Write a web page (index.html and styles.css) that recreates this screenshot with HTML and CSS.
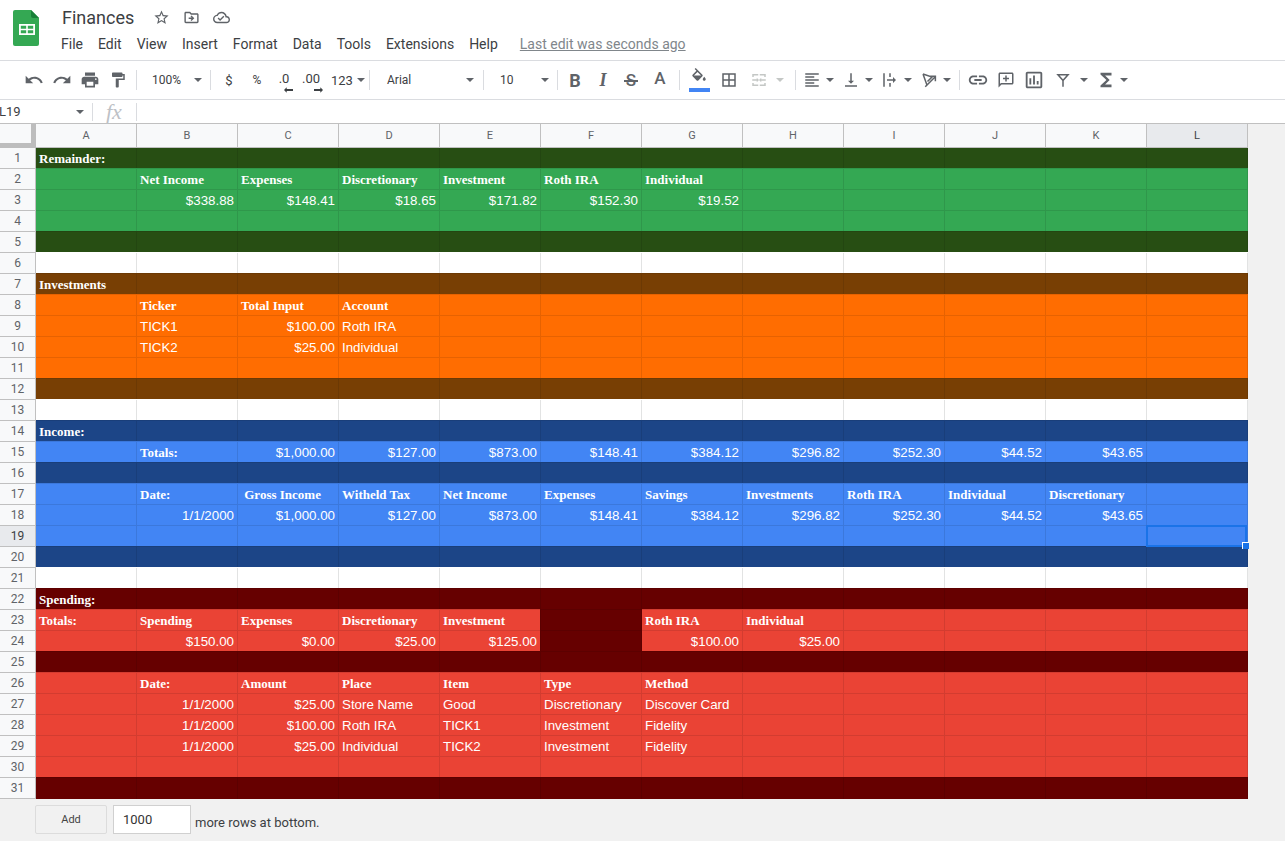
FILE: index.html
```html
<!DOCTYPE html>
<html lang="en">
<head>
    <meta charset="UTF-8">
    <title>Finances - Google Sheets</title>
    <link rel="stylesheet" href="styles.css">
</head>
<body>
    <header class="top">
        <svg class="logo" viewBox="0 0 26 36" width="26" height="36">
            <path fill="#34a853" d="M2 0h16l8 8v26a2 2 0 0 1-2 2H2a2 2 0 0 1-2-2V2a2 2 0 0 1 2-2z"/>
            <path fill="#188038" d="M18 0l8 8h-6a2 2 0 0 1-2-2z"/>
            <path fill="#fff" fill-rule="evenodd" d="M6 14h16v11H6zm1.800 1.800v2.900h5.400v-2.900zm7 0v2.900h5.400v-2.900zm-7 4.500v2.900h5.400v-2.900zm7 0v2.900h5.400v-2.900z"/>
        </svg>
        <div class="top-main">
            <div class="title-row">
                <span class="doc-title">Finances</span>
                <svg class="title-icon" viewBox="0 0 24 24"><path d="M22 9.24l-7.19-.62L12 2 9.19 8.63 2 9.24l5.46 4.73L5.82 21 12 17.27 18.18 21l-1.63-7.03L22 9.24zM12 15.4l-3.76 2.27 1-4.28-3.32-2.88 4.38-.38L12 6.1l1.71 4.04 4.38.38-3.32 2.88 1 4.28L12 15.4z"/></svg>
                <svg class="title-icon" viewBox="0 0 24 24"><path d="M20 6h-8l-2-2H4c-1.1 0-2 .9-2 2v12c0 1.1.9 2 2 2h16c1.1 0 2-.9 2-2V8c0-1.1-.9-2-2-2zm0 12H4V6h5.17l2 2H20v10zm-8.01-9l-1.41 1.41L12.16 12H8v2h4.16l-1.59 1.59L11.99 17 16 13.01 11.99 9z"/></svg>
                <svg class="title-icon" viewBox="0 0 24 24"><path d="M19.35 10.04C18.67 6.59 15.64 4 12 4 9.11 4 6.6 5.64 5.35 8.04 2.34 8.36 0 10.91 0 14c0 3.31 2.69 6 6 6h13c2.76 0 5-2.24 5-5 0-2.64-2.05-4.78-4.65-4.96zM19 18H6c-2.21 0-4-1.79-4-4 0-2.05 1.53-3.76 3.56-3.97l1.07-.11.5-.95C8.08 7.14 9.94 6 12 6c2.62 0 4.88 1.86 5.39 4.43l.3 1.5 1.53.11c1.56.1 2.78 1.41 2.78 2.96 0 1.65-1.35 3-3 3zm-9-3.82l-2.09-2.09L6.5 13.5 10 17l6.01-6.01-1.41-1.41z"/></svg>
            </div>
            <nav class="menu">
                <span>File</span>
                <span>Edit</span>
                <span>View</span>
                <span>Insert</span>
                <span>Format</span>
                <span>Data</span>
                <span>Tools</span>
                <span>Extensions</span>
                <span>Help</span>
                <span class="last-edit">Last edit was seconds ago</span>
            </nav>
        </div>
    </header>

    <div class="toolbar">
        <button class="tb tb-lg"><svg viewBox="0 0 24 24"><path d="M12.5 8c-2.65 0-5.05.99-6.9 2.6L2 7v9h9l-3.62-3.62c1.39-1.16 3.16-1.88 5.12-1.88 3.54 0 6.55 2.31 7.6 5.5l2.37-.78C21.08 11.03 17.15 8 12.5 8z"/></svg></button>
        <button class="tb tb-lg"><svg viewBox="0 0 24 24"><path d="M18.4 10.6C16.55 8.99 14.15 8 11.5 8c-4.65 0-8.58 3.03-9.96 7.22L3.9 16c1.05-3.19 4.05-5.5 7.6-5.5 1.95 0 3.73.72 5.12 1.88L13 16h9V7l-3.6 3.6z"/></svg></button>
        <button class="tb tb-lg"><svg viewBox="0 0 24 24"><path d="M19 8H5c-1.66 0-3 1.34-3 3v6h4v4h12v-4h4v-6c0-1.66-1.34-3-3-3zm-3 11H8v-5h8v5zm3-7c-.55 0-1-.45-1-1s.45-1 1-1 1 .45 1 1-.45 1-1 1zm-1-9H6v4h12V3z"/></svg></button>
        <button class="tb"><svg viewBox="0 0 24 24"><path d="M18 4V3c0-.55-.45-1-1-1H5c-.55 0-1 .45-1 1v4c0 .55.45 1 1 1h12c.55 0 1-.45 1-1V6h1v4H9v11c0 .55.45 1 1 1h2c.55 0 1-.45 1-1v-9h8V4h-3z"/></svg></button>
        <i class="sep"></i>
        <div class="pick pick-zoom"><span>100%</span><b class="arrow"></b></div>
        <i class="sep sep-tight"></i>
        <button class="tb tb-text">$</button>
        <button class="tb tb-text tb-small">%</button>
        <button class="tb tb-dec">.0<svg viewBox="0 0 10 6"><path d="M0 3l3-3v2h7v2H3v2z"/></svg></button>
        <button class="tb tb-dec">.00<svg viewBox="0 0 10 6"><path d="M10 3L7 0v2H0v2h7v2z"/></svg></button>
        <div class="pick pick-num"><span>123</span><b class="arrow"></b></div>
        <i class="sep"></i>
        <div class="pick pick-font"><span>Arial</span><b class="arrow"></b></div>
        <i class="sep sep-tight"></i>
        <div class="pick pick-size"><span>10</span><b class="arrow"></b></div>
        <i class="sep sep-size"></i>
        <button class="tb tb-fmt tb-bold">B</button>
        <button class="tb tb-fmt tb-italic">I</button>
        <button class="tb tb-fmt tb-strike">S</button>
        <button class="tb tb-fmt tb-color">A</button>
        <i class="sep sep-wide"></i>
        <button class="tb tb-fill"><svg viewBox="0 0 24 24"><path d="M16.56 8.94L7.62 0 6.21 1.41l2.38 2.38-5.15 5.15c-.59.59-.59 1.54 0 2.12l5.5 5.5c.29.29.68.44 1.06.44s.77-.15 1.06-.44l5.5-5.5c.59-.58.59-1.53 0-2.12zM5.21 10L10 5.21 14.79 10H5.21zM19 11.5s-2 2.17-2 3.5c0 1.1.9 2 2 2s2-.9 2-2c0-1.33-2-3.5-2-3.5z"/></svg></button>
        <button class="tb"><svg viewBox="0 0 24 24"><path d="M3 3v18h18V3H3zm8 16H5v-6h6v6zm0-8H5V5h6v6zm8 8h-6v-6h6v6zm0-8h-6V5h6v6z"/></svg></button>
        <button class="tb tb-off"><svg viewBox="0 0 24 24"><path d="M3 4h8v2H5v2H3zm10 0h8v4h-2V6h-6zM3 16h2v2h6v2H3zm16 0h2v4h-8v-2h6zM3 11h6V9l3 3-3 3v-2H3zm18 0h-6V9l-3 3 3 3v-2h6z"/></svg></button>
        <b class="arrow arrow-off"></b>
        <i class="sep sep-merge"></i>
        <button class="tb tb-n tb-align"><svg viewBox="0 0 24 24"><path d="M15 15H3v2h12v-2zm0-8H3v2h12V7zM3 13h18v-2H3v2zm0 8h18v-2H3v2zM3 3v2h18V3H3z"/></svg></button>
        <b class="arrow"></b>
        <button class="tb tb-n"><svg viewBox="0 0 24 24"><path d="M16 13h-3V3h-2v10H8l4 4 4-4zM4 19v2h16v-2H4z"/></svg></button>
        <b class="arrow"></b>
        <button class="tb tb-n"><svg viewBox="0 0 24 24"><path d="M3 3h2v18H3zM11 3h2v5h-2zm0 13h2v5h-2zM8 11h8V8l4 4-4 4v-3H8z"/></svg></button>
        <b class="arrow"></b>
        <button class="tb tb-n"><svg class="stroked" viewBox="0 0 24 24"><path d="M4 4l5 14M4 4l12 4-6 6M7 21L20 8M14 7h6.500v6.500"/></svg></button>
        <b class="arrow"></b>
        <i class="sep sep-rotate"></i>
        <button class="tb tb-xl"><svg viewBox="0 0 24 24"><path d="M3.9 12c0-1.71 1.39-3.1 3.1-3.1h4V7H7c-2.76 0-5 2.24-5 5s2.24 5 5 5h4v-1.9H7c-1.71 0-3.1-1.39-3.1-3.1zM8 13h8v-2H8v2zm9-6h-4v1.9h4c1.71 0 3.1 1.39 3.1 3.1s-1.39 3.1-3.1 3.1h-4V17h4c2.76 0 5-2.24 5-5s-2.24-5-5-5z"/></svg></button>
        <button class="tb"><svg viewBox="0 0 24 24"><path d="M20 2H4c-1.1 0-2 .9-2 2v18l4-4h14c1.1 0 2-.9 2-2V4c0-1.1-.9-2-2-2zm0 14H5.17L4 17.17V4h16v12zM11 14h2v-3h3V9h-3V6h-2v3H8v2h3z"/></svg></button>
        <button class="tb tb-xl"><svg viewBox="0 0 24 24"><path d="M19 3H5c-1.1 0-2 .9-2 2v14c0 1.1.9 2 2 2h14c1.1 0 2-.9 2-2V5c0-1.1-.9-2-2-2zm0 16H5V5h14v14zM7 10h2v7H7zm4-3h2v10h-2zm4 6h2v4h-2z"/></svg></button>
        <button class="tb tb-filter"><svg viewBox="0 0 24 24"><path fill-rule="evenodd" d="M3 4h18l-8 9v8h-2v-8zm4.500 2L12 11l4.500-5z"/></svg></button>
        <b class="arrow"></b>
        <button class="tb tb-n tb-xl tb-sigma"><svg viewBox="0 0 24 24"><path d="M18 4H6v2l6.500 6L6 18v2h12v-3h-7l5-5-5-5h7V4z"/></svg></button>
        <b class="arrow"></b>
    </div>

    <div class="formula-bar">
        <div class="name-box"><span>L19</span><b class="arrow"></b></div>
        <i class="fsep"></i>
        <span class="fx">fx</span>
        <i class="fsep"></i>
    </div>

    <table class="sheet">
        <thead>
            <tr>
                <th class="corner"></th>
                <th>A</th><th>B</th><th>C</th><th>D</th><th>E</th><th>F</th><th>G</th><th>H</th><th>I</th><th>J</th><th>K</th><th class="active">L</th>
            </tr>
        </thead>
        <tbody>
            <tr class="dark-green"><th>1</th><td class="h">Remainder:</td><td></td><td></td><td></td><td></td><td></td><td></td><td></td><td></td><td></td><td></td><td></td></tr>
            <tr class="green"><th>2</th><td></td><td class="h">Net Income</td><td class="h">Expenses</td><td class="h">Discretionary</td><td class="h">Investment</td><td class="h">Roth IRA</td><td class="h">Individual</td><td></td><td></td><td></td><td></td><td></td></tr>
            <tr class="green"><th>3</th><td></td><td class="n">$338.88</td><td class="n">$148.41</td><td class="n">$18.65</td><td class="n">$171.82</td><td class="n">$152.30</td><td class="n">$19.52</td><td></td><td></td><td></td><td></td><td></td></tr>
            <tr class="green"><th>4</th><td></td><td></td><td></td><td></td><td></td><td></td><td></td><td></td><td></td><td></td><td></td><td></td></tr>
            <tr class="dark-green"><th>5</th><td></td><td></td><td></td><td></td><td></td><td></td><td></td><td></td><td></td><td></td><td></td><td></td></tr>
            <tr class="blank"><th>6</th><td></td><td></td><td></td><td></td><td></td><td></td><td></td><td></td><td></td><td></td><td></td><td></td></tr>
            <tr class="dark-orange"><th>7</th><td class="h">Investments</td><td></td><td></td><td></td><td></td><td></td><td></td><td></td><td></td><td></td><td></td><td></td></tr>
            <tr class="orange"><th>8</th><td></td><td class="h">Ticker</td><td class="h">Total Input</td><td class="h">Account</td><td></td><td></td><td></td><td></td><td></td><td></td><td></td><td></td></tr>
            <tr class="orange"><th>9</th><td></td><td>TICK1</td><td class="n">$100.00</td><td>Roth IRA</td><td></td><td></td><td></td><td></td><td></td><td></td><td></td><td></td></tr>
            <tr class="orange"><th>10</th><td></td><td>TICK2</td><td class="n">$25.00</td><td>Individual</td><td></td><td></td><td></td><td></td><td></td><td></td><td></td><td></td></tr>
            <tr class="orange"><th>11</th><td></td><td></td><td></td><td></td><td></td><td></td><td></td><td></td><td></td><td></td><td></td><td></td></tr>
            <tr class="dark-orange"><th>12</th><td></td><td></td><td></td><td></td><td></td><td></td><td></td><td></td><td></td><td></td><td></td><td></td></tr>
            <tr class="blank"><th>13</th><td></td><td></td><td></td><td></td><td></td><td></td><td></td><td></td><td></td><td></td><td></td><td></td></tr>
            <tr class="dark-blue"><th>14</th><td class="h">Income:</td><td></td><td></td><td></td><td></td><td></td><td></td><td></td><td></td><td></td><td></td><td></td></tr>
            <tr class="blue"><th>15</th><td></td><td class="h">Totals:</td><td class="n">$1,000.00</td><td class="n">$127.00</td><td class="n">$873.00</td><td class="n">$148.41</td><td class="n">$384.12</td><td class="n">$296.82</td><td class="n">$252.30</td><td class="n">$44.52</td><td class="n">$43.65</td><td></td></tr>
            <tr class="dark-blue"><th>16</th><td></td><td></td><td></td><td></td><td></td><td></td><td></td><td></td><td></td><td></td><td></td><td></td></tr>
            <tr class="blue"><th>17</th><td></td><td class="h">Date:</td><td class="h">&nbsp;Gross Income</td><td class="h">Witheld Tax</td><td class="h">Net Income</td><td class="h">Expenses</td><td class="h">Savings</td><td class="h">Investments</td><td class="h">Roth IRA</td><td class="h">Individual</td><td class="h">Discretionary</td><td></td></tr>
            <tr class="blue"><th>18</th><td></td><td class="n">1/1/2000</td><td class="n">$1,000.00</td><td class="n">$127.00</td><td class="n">$873.00</td><td class="n">$148.41</td><td class="n">$384.12</td><td class="n">$296.82</td><td class="n">$252.30</td><td class="n">$44.52</td><td class="n">$43.65</td><td></td></tr>
            <tr class="blue"><th class="active">19</th><td></td><td></td><td></td><td></td><td></td><td></td><td></td><td></td><td></td><td></td><td></td><td class="selected"><span class="handle"></span></td></tr>
            <tr class="dark-blue"><th>20</th><td></td><td></td><td></td><td></td><td></td><td></td><td></td><td></td><td></td><td></td><td></td><td></td></tr>
            <tr class="blank"><th>21</th><td></td><td></td><td></td><td></td><td></td><td></td><td></td><td></td><td></td><td></td><td></td><td></td></tr>
            <tr class="dark-red"><th>22</th><td class="h">Spending:</td><td></td><td></td><td></td><td></td><td></td><td></td><td></td><td></td><td></td><td></td><td></td></tr>
            <tr class="red"><th>23</th><td class="h">Totals:</td><td class="h">Spending</td><td class="h">Expenses</td><td class="h">Discretionary</td><td class="h">Investment</td><td class="gap"></td><td class="h">Roth IRA</td><td class="h">Individual</td><td></td><td></td><td></td><td></td></tr>
            <tr class="red"><th>24</th><td></td><td class="n">$150.00</td><td class="n">$0.00</td><td class="n">$25.00</td><td class="n">$125.00</td><td class="gap"></td><td class="n">$100.00</td><td class="n">$25.00</td><td></td><td></td><td></td><td></td></tr>
            <tr class="dark-red"><th>25</th><td></td><td></td><td></td><td></td><td></td><td></td><td></td><td></td><td></td><td></td><td></td><td></td></tr>
            <tr class="red"><th>26</th><td></td><td class="h">Date:</td><td class="h">Amount</td><td class="h">Place</td><td class="h">Item</td><td class="h">Type</td><td class="h">Method</td><td></td><td></td><td></td><td></td><td></td></tr>
            <tr class="red"><th>27</th><td></td><td class="n">1/1/2000</td><td class="n">$25.00</td><td>Store Name</td><td>Good</td><td>Discretionary</td><td>Discover Card</td><td></td><td></td><td></td><td></td><td></td></tr>
            <tr class="red"><th>28</th><td></td><td class="n">1/1/2000</td><td class="n">$100.00</td><td>Roth IRA</td><td>TICK1</td><td>Investment</td><td>Fidelity</td><td></td><td></td><td></td><td></td><td></td></tr>
            <tr class="red"><th>29</th><td></td><td class="n">1/1/2000</td><td class="n">$25.00</td><td>Individual</td><td>TICK2</td><td>Investment</td><td>Fidelity</td><td></td><td></td><td></td><td></td><td></td></tr>
            <tr class="red"><th>30</th><td></td><td></td><td></td><td></td><td></td><td></td><td></td><td></td><td></td><td></td><td></td><td></td></tr>
            <tr class="dark-red"><th>31</th><td></td><td></td><td></td><td></td><td></td><td></td><td></td><td></td><td></td><td></td><td></td><td></td></tr>
        </tbody>
    </table>

    <div class="add-rows">
        <button class="add-btn">Add</button>
        <span class="add-input">1000</span>
        <span class="add-label">more rows at bottom.</span>
    </div>
</body>
</html>
```

FILE: styles.css
```css
* {
    box-sizing: border-box;
}
html, body {
    height: 841px;
    overflow: hidden;
}
body {
    margin: 0;
    background: #f1f1f1;
    font-family: Roboto, "Liberation Sans", sans-serif;
    color: #444746;
}

/* header */
.top {
    display: flex;
    height: 60px;
    background: white;
}
.logo {
    margin: 10px 23px 0 13px;
}
.top-main {
    padding-top: 7px;
}
.title-row {
    display: flex;
    align-items: center;
    height: 20px;
}
.doc-title {
    width: 90px;
    font-size: 18px;
    color: #3c4043;
}
.title-icon {
    width: 17px;
    height: 17px;
    margin: 0 12px 0 1px;
    fill: #5f6368;
}
.menu {
    display: flex;
    margin: 8px 0 0 -1px;
    font-size: 14px;
    line-height: 18px;
    color: #3c4043;
}
.menu span {
    margin-right: 15px;
}
.menu .last-edit {
    margin-left: 7px;
    color: #80868b;
    text-decoration: underline;
}

/* toolbar */
.toolbar {
    display: flex;
    align-items: center;
    height: 40px;
    padding-left: 20px;
    background: white;
    border-top: 1px solid #dadce0;
    border-bottom: 1px solid #dadce0;
}
.tb {
    flex: none;
    display: flex;
    align-items: center;
    justify-content: center;
    width: 28px;
    height: 28px;
    padding: 0;
    border: none;
    background: none;
    font-family: Roboto, sans-serif;
    color: #5f6368;
}
.tb svg {
    flex: none;
    width: 18px;
    height: 18px;
    fill: #5f6368;
}
.tb.tb-lg svg {
    width: 20px;
    height: 20px;
}
.tb.tb-xl svg {
    width: 22px;
    height: 22px;
}
.tb svg.stroked {
    fill: none;
    stroke: #5f6368;
    stroke-width: 2;
}
.tb-n {
    width: 22px;
}
.tb-n + .arrow + .tb-n {
    margin-left: 3px;
}
.tb-off svg {
    fill: #c4c7c5;
}
.tb-text {
    font-size: 13px;
    color: #3c4043;
}
.tb-small {
    font-size: 12px;
}
.tb-dec {
    position: relative;
    padding: 0 2px 3px 0;
    font-size: 13px;
    color: #3c4043;
}
.tb-dec + .tb-dec {
    padding-right: 4px;
}
.tb .tb-dec-arrow,
.tb-dec svg {
    position: absolute;
    right: 6px;
    bottom: 1px;
    width: 9px;
    height: 6px;
    fill: #3c4043;
}
.tb-dec + .tb-dec svg {
    right: 4px;
}
.tb-fmt {
    font-size: 18px;
}
.tb-bold {
    font-weight: 700;
}
.tb-italic {
    font-family: "Liberation Serif", serif;
    font-style: italic;
    font-weight: 700;
}
.tb-strike {
    position: relative;
    font-size: 17px;
    font-weight: 500;
}
.tb-strike::after {
    content: "";
    position: absolute;
    left: 7px;
    right: 7px;
    top: 14px;
    height: 2px;
    background: #5f6368;
}
.tb-color {
    margin: -5px 0 0 1px;
    font-size: 17px;
    font-weight: 500;
}
.tb-fill {
    position: relative;
    margin-left: 5px;
    margin-right: 2px;
}
.tb-fill svg {
    margin-top: -6px;
}
.tb-fill::after {
    content: "";
    position: absolute;
    left: 4px;
    bottom: 2px;
    width: 21px;
    height: 4px;
    background: #4285f4;
}
.tb + .tb-off {
    margin-left: 2px;
}
.tb-align {
    margin-left: 5px;
}
.tb-filter {
    margin-left: 1px;
}
.tb.tb-sigma {
    margin-left: 4px;
}
.sep {
    flex: none;
    width: 1px;
    height: 20px;
    margin: 0 4px;
    background: #dadce0;
}
.sep-tight {
    margin: 0 4px 0 0;
}
.sep-size {
    margin: 0 3px 0 4px;
}
.sep-wide {
    margin: 0 0 0 5px;
}
.sep-merge {
    margin: 0 0 0 8px;
}
.sep-rotate {
    margin: 0 4px 0 5px;
}
.pick {
    flex: none;
    display: flex;
    align-items: center;
    justify-content: space-between;
    font-size: 12px;
    color: #3c4043;
}
.pick-zoom {
    width: 73px;
    margin-left: -4px;
    padding: 0 8px 0 15px;
}
.pick-num {
    width: 38px;
    padding-left: 4px;
    font-size: 13px;
}
.pick-font {
    width: 109px;
    padding: 0 9px 0 13px;
}
.pick-size {
    width: 65px;
    padding: 0 4px 0 12px;
}
.arrow {
    flex: none;
    display: block;
    width: 8px;
    height: 0;
    margin: 0 3px;
    border-top: 4px solid #5f6368;
    border-left: 4px solid transparent;
    border-right: 4px solid transparent;
}
.pick .arrow {
    margin: 0;
}
.arrow-off {
    border-top-color: #c4c7c5;
}

/* formula bar */
.formula-bar {
    display: flex;
    align-items: center;
    height: 24px;
    background: white;
    border-bottom: 1px solid #c0c0c0;
}
.name-box {
    display: flex;
    align-items: center;
    justify-content: space-between;
    width: 88px;
    margin-left: -1px;
    font-size: 13px;
    color: #3c4043;
}
.fsep {
    width: 1px;
    height: 18px;
    margin-left: 5px;
    background: #dadce0;
}
.fx {
    width: 43px;
    padding-left: 13px;
    font-family: "Liberation Serif", serif;
    font-style: italic;
    font-size: 22px;
    line-height: 20px;
    color: #bdc1c6;
}
.fx + .fsep {
    margin-left: 0;
}

/* grid */
.sheet {
    table-layout: fixed;
    width: 1248px;
    border-collapse: separate;
    border-spacing: 0;
    background: white;
    font-family: "Liberation Sans", Arial, sans-serif;
    font-size: 13.33px;
}
.sheet th {
    padding: 0;
    background: #f8f9fa;
    border-right: 1px solid #c0c0c0;
    border-bottom: 1px solid #c0c0c0;
    font-family: Roboto, sans-serif;
    font-weight: 400;
    font-size: 11px;
    color: #5f6368;
}
.sheet th.active {
    background: #e8eaed;
    color: #3c4043;
}
.sheet thead th {
    width: 101px;
    height: 24px;
}
.sheet thead .corner {
    width: 36px;
    border-right: 5px solid #bdbdbd;
    border-bottom: 5px solid #bdbdbd;
}
.sheet tbody th {
    height: 21px;
    font-size: 12px;
}
/* the line between two rows is drawn by the lower one, in its own colour */
.sheet td {
    height: 21px;
    padding: 1px 3px 0;
    white-space: nowrap;
    line-height: 20px;
    border-right: 1px solid var(--line);
    background: var(--fill);
    box-shadow: 0 -1px 0 var(--line);
    color: white;
}
.sheet tbody tr:first-child td {
    box-shadow: none;
}
.sheet td.h {
    font-family: "Liberation Serif", serif;
    font-weight: 700;
    font-size: 13px;
}
.sheet td.n {
    text-align: right;
}
.blank { --fill: #fff; --line: #e2e3e3; }
.blank td { box-shadow: 0 -1px 0 #fff; }
.dark-green { --fill: #274e13; --line: #234611; }
.green { --fill: #34a853; --line: #2f974b; }
.dark-orange { --fill: #783f04; --line: #6c3904; }
.orange { --fill: #ff6d01; --line: #e66201; }
.dark-blue { --fill: #1c4587; --line: #193e7a; }
.blue { --fill: #4285f4; --line: #3b78dc; }
.dark-red { --fill: #660000; --line: #5c0000; }
.red { --fill: #ea4335; --line: #d33c30; }
.sheet .gap {
    --fill: #660000;
    --line: #5c0000;
    box-shadow: -1px -1px 0 #5c0000;
}

.sheet td.selected {
    position: relative;
}
.selected::after {
    content: "";
    position: absolute;
    left: -1px;
    top: -1px;
    right: 0;
    bottom: 0;
    border: 2px solid #1a73e8;
}
.handle {
    position: absolute;
    z-index: 1;
    right: -2px;
    bottom: -2px;
    width: 7px;
    height: 7px;
    background: #1a73e8;
    border-top: 1px solid white;
    border-left: 1px solid white;
}

/* add rows */
.add-rows {
    display: flex;
    align-items: center;
    margin: 6px 0 0 35px;
    font-size: 13px;
    color: #3c4043;
}
.add-btn {
    width: 72px;
    height: 29px;
    padding: 0;
    background: #f1f1f1;
    border: 1px solid #dcdcdc;
    border-radius: 2px;
    font-family: Roboto, sans-serif;
    font-size: 11px;
    color: #444;
}
.add-input {
    width: 78px;
    height: 29px;
    margin-left: 6px;
    padding-left: 9px;
    line-height: 27px;
    background: white;
    border: 1px solid #d0d0d0;
    color: #333;
}
.add-label {
    margin: 6px 0 0 4px;
}
```
